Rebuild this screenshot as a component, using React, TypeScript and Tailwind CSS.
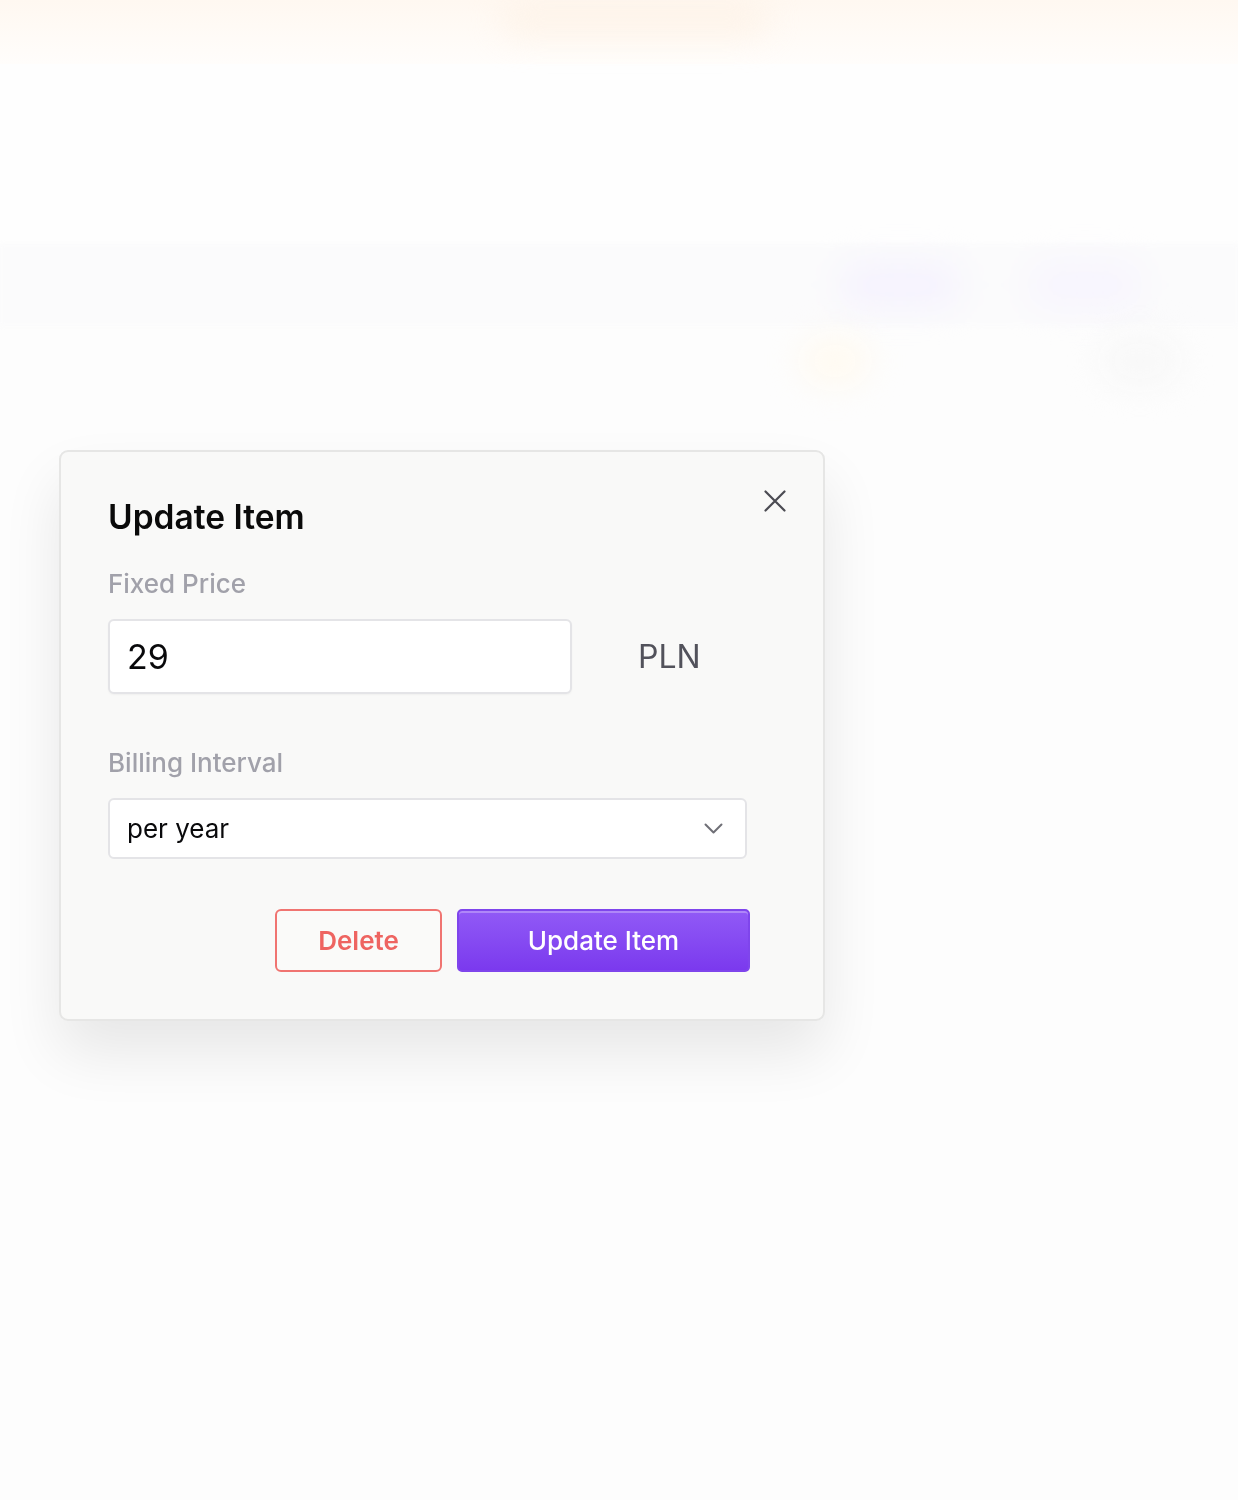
import React from 'react';

const font = { fontFamily: 'Inter, "Noto Sans", sans-serif' };

const Backdrop: React.FC = () => (
  <div className="w-full h-[1500px] bg-[#fdfdfd] overflow-hidden">
    {/* top banner, blurred */}
    <div className="h-[64px] bg-gradient-to-b from-[#fff8f1] to-[#fffdfb] flex pl-[500px]">
      <div className="w-[270px] h-[38px] rounded-full bg-[#fdf0e3] blur-lg opacity-60" />
    </div>
    <div className="h-[180px] bg-[#fefefe]" />
    {/* nav bar, blurred */}
    <div className="h-[82px] bg-[#fbfbfc] flex items-center pl-[840px] gap-[70px] blur-[2px]">
      <div className="w-[120px] h-[44px] rounded-full bg-[#f5f2fe] blur-lg" />
      <div className="w-[110px] h-[44px] rounded-full bg-[#f7f4fe] blur-lg" />
    </div>
    <div className="h-[70px] flex items-center pl-[800px] gap-[230px]">
      <div className="w-[70px] h-[50px] rounded-full bg-[#fffaf1] blur-lg" />
      <div className="w-[80px] h-[50px] rounded-full bg-[#f8f8f8] blur-lg" />
    </div>
  </div>
);

const CloseIcon = () => (
  <svg width="22" height="22" viewBox="0 0 22 22" fill="none" stroke="#4b4b52" strokeWidth={2.2} strokeLinecap="round">
    <path d="M1.5 1.5L20.5 20.5M20.5 1.5L1.5 20.5" />
  </svg>
);

const Chevron = () => (
  <svg width="19" height="11" viewBox="0 0 19 11" fill="none" stroke="#6f6f76" strokeWidth={2} strokeLinecap="round" strokeLinejoin="round">
    <path d="M1.5 1.5L9.5 9.5L17.5 1.5" />
  </svg>
);

const UpdateItemModal: React.FC = () => (
  <div className="relative w-[766px] h-[571px] bg-[#f9f9f8] border-2 border-[#e6e6e5] rounded-[9px] shadow-[0_32px_60px_rgba(0,0,0,0.09)] pt-[45px] pl-[47px] pr-[47px]">
    <button className="absolute top-[38px] right-[37px] p-0">
      <CloseIcon />
    </button>

    <h2 className="text-[33.5px] leading-[40px] font-semibold text-[#0a0a0a]">Update Item</h2>

    <label className="block mt-[31px] text-[26px] leading-[32px] font-medium text-[#a1a1aa]">Fixed Price</label>
    <div className="mt-[19px] flex items-center">
      <div className="w-[464px] h-[75px] bg-white border-2 border-[#e4e4e7] rounded-[6px] shadow-[0_1px_2px_rgba(0,0,0,0.04)] flex items-center pl-[17px]">
        <span className="text-[34px] text-[#09090b]">29</span>
      </div>
      <span className="ml-[66px] text-[32px] text-[#52525b]">PLN</span>
    </div>

    <label className="block mt-[53px] text-[26px] leading-[32px] font-medium text-[#a1a1aa]">Billing Interval</label>
    <div className="mt-[19px] w-[639px] h-[61px] bg-white border-2 border-[#e4e4e7] rounded-[6px] flex items-center justify-between pl-[17px] pr-[22px]">
      <span className="text-[26px] text-[#09090b]">per year</span>
      <Chevron />
    </div>

    <div className="mt-[50px] flex pl-[167px] gap-[15px]">
      <button className="w-[167px] h-[63px] border-2 border-[#f07471] rounded-[6px] bg-[#fafaf9] text-[26px] font-semibold text-[#ee6461]">
        Delete
      </button>
      <button className="w-[293px] h-[63px] border-2 border-[#7f45ec] rounded-[5px] bg-gradient-to-b from-[#9159f6] to-[#7b39ee] shadow-[inset_0_2px_0_rgba(255,255,255,0.28)] text-[26px] font-medium text-white">
        Update Item
      </button>
    </div>
  </div>
);

export default function App() {
  return (
    <div className="relative w-full" style={font}>
      <Backdrop />
      <div className="absolute inset-0 pt-[450px] pl-[59px]">
        <UpdateItemModal />
      </div>
    </div>
  );
}
